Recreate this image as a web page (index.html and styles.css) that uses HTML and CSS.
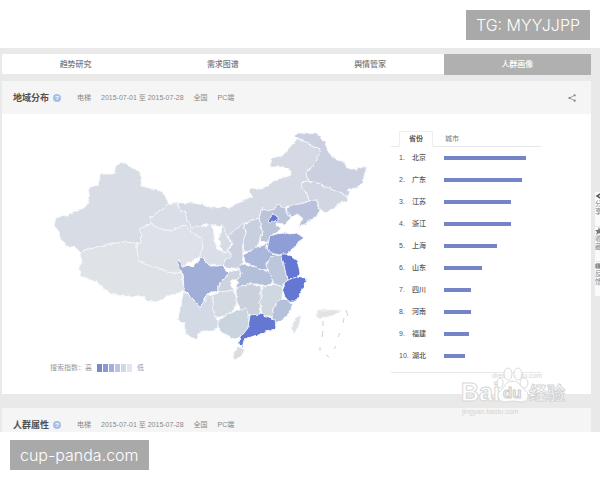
FILE: index.html
```
<!DOCTYPE html>
<html lang="zh-CN">
<head>
<meta charset="utf-8">
<meta name="viewport" content="width=device-width, initial-scale=1">
<title>人群画像</title>
<link rel="stylesheet" href="styles.css">
</head>
<body>
<header class="top"><span class="tag">TG: MYYJJPP</span></header>
<main class="stage">
  <nav class="tabs">
    <a href="#">趋势研究</a>
    <a href="#">需求图谱</a>
    <a href="#">舆情管家</a>
    <a href="#" class="current" aria-current="page">人群画像</a>
  </nav>
  <section class="panel">
    <div class="panel-head">
      <h2>地域分布</h2>
      <button class="help" aria-label="说明">?</button>
      <span class="meta">电梯</span>
      <span class="meta">2015-07-01 至 2015-07-28</span>
      <span class="meta">全国</span>
      <span class="meta">PC端</span>
      <button class="share" aria-label="分享">
        <svg viewBox="0 0 8 8" width="8" height="8"><path d="M6.8 1.2 1.4 4l5.4 2.8" fill="none" stroke="#999" stroke-width=".9"/><circle cx="6.7" cy="1.3" r="1.1" fill="#888"/><circle cx="1.4" cy="4" r="1.1" fill="#888"/><circle cx="6.7" cy="6.7" r="1.1" fill="#888"/></svg>
      </button>
    </div>
    <div class="panel-body">
      <div class="region">
        <svg class="map" viewBox="50 130 304 232" role="img" aria-label="地域分布地图">
          <defs><filter id="coast" x="-5%" y="-5%" width="110%" height="110%" color-interpolation-filters="sRGB"><feTurbulence type="fractalNoise" baseFrequency=".2" numOctaves="2" seed="4"/><feDisplacementMap in="SourceGraphic" scale="4" xChannelSelector="R" yChannelSelector="G"/></filter></defs>
          <g filter="url(#coast)" stroke="#f4f6fa" stroke-width=".9" stroke-linejoin="round">
            <path fill="#d8dde5" d="M123 160 116 165 114 173 101 173 98 184 88 187 90 196 86 206 71 213 56 217 54 225 59 230 60 237 66 245 75 246 80 253 84 249 100 246 121 241 140 242 142 235 139 228 151 223 151 216 169 203 163 191 153 188 141 185 140 171 129 166z"/>
            <path fill="#dfe2e7" d="M80 253 84 249 100 246 121 241 137 242 138 260 153 266 173 272 181 270 184 290 168 295 156 301 148 300 143 295 131 296 111 293 96 281 81 275 79 266 82 260z"/>
            <path fill="#dee1e7" d="M140 242 142 235 139 228 151 223 162 229 173 229 184 224 190 229 202 238 203 247 199 257 187 262 181 270 173 272 153 266 138 260 137 242z"/>
            <path fill="#dadee7" d="M169 203 177 202 180 208 186 211 187 218 192 226 205 225 210 222 215 233 213 238 218 248 225 252 229 250 232 256 226 258 222 265 209 264 203 257 199 257 203 247 202 238 190 229 184 224 173 229 162 229 151 223 151 216z"/>
            <path fill="#d4d9e3" d="M177 202 195 202 213 207 230 206 248 197 254 195 249 190 250 187 262 188 275 179 290 175 291 170 284 166 270 166 272 158 283 154 297 138 304 140 312 145 321 148 317 160 306 173 308 180 302 181 303 188 308 195 309 200 300 203 290 204 285 207 280 203 271 210 262 208 259 217 243 222 228 237 222 226 212 224 207 222 200 226 192 226 187 218 186 211 180 208z"/>
            <path fill="#cbd0e0" d="M294 135 298 132 318 133 324 140 329 152 337 159 345 161 346 168 357 168 367 165 362 182 355 187 349 188 347 196 340 192 328 187 317 182 308 180 306 173 317 160 321 148 312 145 304 140z"/>
            <path fill="#d1d6e2" d="M302 181 308 180 317 182 328 187 340 192 347 196 348 199 338 204 330 209 325 212 320 208 316 199 309 200 308 195 303 188z"/>
            <path fill="#b9c1dd" d="M316 199 320 210 316 216 305 223 299 226 302 216 296 213 291 217 287 210 290 204 300 203 309 200z"/>
            <path fill="#bcc4da" d="M262 208 271 210 280 203 285 207 291 217 285 223 276 222 281 228 275 232 268 242 260 240 262 230 259 217z"/>
            <path fill="#6275d0" d="M268 220 273 213 277 215 277 219 271 222z"/>
            <path fill="#c8cfde" d="M244 223 259 217 262 230 259 240 258 248 245 251 243 240 246 232z"/>
            <path fill="#cbd1df" d="M243 222 246 232 243 240 244 251 242 262 239 268 226 266 222 264 226 258 232 256 229 250 225 252 233 244 228 235z"/>
            <path fill="#d6dbe4" d="M222 223 228 237 232 243 225 252 220 246 219 236z"/>
            <path fill="#8f9ed7" d="M267 248 270 235 283 231 290 233 297 232 304 237 298 241 293 248 287 253 279 254 270 252z"/>
            <path fill="#aab6da" d="M243 254 258 246 267 243 267 248 272 252 277 255 268 259 266 263 270 270 262 268 252 265 245 260z"/>
            <path fill="#bdc7db" d="M270 256 281 254 284 262 287 273 287 279 282 286 274 282 270 274 266 264z"/>
            <path fill="#6477d3" d="M281 253 288 253 297 260 300 272 297 277 287 278 284 264z"/>
            <path fill="#6477d3" d="M287 279 297 276 306 278 302 290 296 300 288 300 282 290z"/>
            <path fill="#b4c0da" d="M239 268 241 262 252 265 262 268 270 272 273 281 265 285 256 283 248 283 236 288 238 278 241 273z"/>
            <path fill="#cdd4df" d="M229 272 239 268 241 273 238 278 230 280 234 289 224 291 217 290 220 282z"/>
            <path fill="#a1aed7" d="M178 257 183 266 193 265 202 257 210 265 222 265 229 272 220 282 217 290 207 293 203 303 200 307 193 298 188 292 184 290 183 273 177 262z"/>
            <path fill="#d3d9e5" d="M184 291 193 298 200 307 205 300 207 293 213 296 213 306 215 316 220 322 214 330 203 330 198 333 196 339 186 333 184 323 177 318 181 307 182 297z"/>
            <path fill="#d3dae2" d="M212 295 220 291 234 289 237 300 235 308 225 315 215 316 213 306z"/>
            <path fill="#cad1dd" d="M236 288 248 283 261 285 261 300 260 312 253 315 246 312 240 308 237 300z"/>
            <path fill="#d0d8df" d="M262 286 274 283 282 286 281 298 273 308 272 315 262 315 260 302z"/>
            <path fill="#b5c0da" d="M281 297 288 300 293 302 291 308 284 318 276 323 272 316 273 308z"/>
            <path fill="#cad4de" d="M218 320 230 312 246 307 249 315 249 325 243 335 234 338 222 331 218 326z"/>
            <path fill="#6477d3" d="M250 314 260 313 275 318 276 327 260 333 245 338 242 346 239 342 240 337 248 327z"/>
            <path fill="#d9dce0" d="M233 357 234 351 238 347 245 348 242 355 236 359z"/>
            <path fill="#e0e3e6" d="M298 314 301 316 298 327 294 333 292 326 295 318z"/>
            <path fill="#e2e3e3" d="M317 309 342 309 334 314 320 318 317 316z"/>
          </g>
          <path d="M323 320v5M323 330l-1 6M320 346v4M326 354l3 2M334 348l2-3M338 336l2-4M343 322l1-5M346 309l2 6" fill="none" stroke="#ccc" stroke-width=".9"/>
        </svg>
        <div class="legend"><span>搜索指数：高</span><span class="scale"><i class="s1"></i><i class="s2"></i><i class="s3"></i><i class="s4"></i><i class="s5"></i><i class="s6"></i></span><span>低</span></div>
      </div>
      <div class="rank">
        <div class="rank-tabs"><button class="on">省份</button><button>城市</button></div>
        <ol>
          <li><span>1.</span><b>北京</b><i style="width:82px"></i></li>
          <li><span>2.</span><b>广东</b><i style="width:78px"></i></li>
          <li><span>3.</span><b>江苏</b><i style="width:67px"></i></li>
          <li><span>4.</span><b>浙江</b><i style="width:67px"></i></li>
          <li><span>5.</span><b>上海</b><i style="width:53px"></i></li>
          <li><span>6.</span><b>山东</b><i style="width:38px"></i></li>
          <li><span>7.</span><b>四川</b><i style="width:27px"></i></li>
          <li><span>8.</span><b>河南</b><i style="width:27px"></i></li>
          <li><span>9.</span><b>福建</b><i style="width:25px"></i></li>
          <li><span>10.</span><b>湖北</b><i style="width:21px"></i></li>
        </ol>
      </div>
    </div>
  </section>
  <section class="panel">
    <div class="panel-head cut">
      <h2>人群属性</h2>
      <button class="help" aria-label="说明">?</button>
      <span class="meta">电梯</span>
      <span class="meta">2015-07-01 至 2015-07-28</span>
      <span class="meta">全国</span>
      <span class="meta">PC端</span>
    </div>
  </section>
  <aside class="dock">
    <a href="#"><svg viewBox="0 0 8 8" width="8" height="8"><path d="M7 1 2 4l5 3" fill="none" stroke="#555" stroke-width="1.5"/></svg>分享</a>
    <a href="#"><svg viewBox="0 0 8 8" width="8" height="8"><path d="M4 0 5 3h3L6 5l1 3-3-2-3 2 1-3-2-2h3z" fill="#777"/></svg>收藏</a>
    <a href="#"><svg viewBox="0 0 8 8" width="8" height="8"><path d="M1 2h7v4H1zM1 4h7M4 2v4" fill="none" stroke="#666"/></svg>反馈</a>
  </aside>
  <div class="watermark">
    <svg viewBox="0 0 112 54" width="112" height="54">
      <text x="32" y="11" class="wm-url">dream   aidu.com</text>
      <text x="1" y="34" class="wm-logo">Bai</text>
      <g fill="#fff" fill-opacity=".85" stroke="#d2d2d2" stroke-width=".8">
        <ellipse cx="48" cy="7" rx="4" ry="6"/><ellipse cx="58" cy="7" rx="4" ry="6"/><ellipse cx="40" cy="16" rx="3" ry="5"/><ellipse cx="64" cy="16" rx="4" ry="5"/>
        <path d="M52 14c-6 0-7 6-12 10-4 4-2 11 5 11 4 0 5-1 8-1s5 1 9 1c6 0 8-7 4-11-5-4-7-10-14-10z"/>
      </g>
      <text x="43" y="31" class="wm-du">du</text><text x="69" y="33" class="wm-cn">经验</text>
      <text x="2" y="47" class="wm-url">jingyan.baidu.com</text>
    </svg>
  </div>
</main>
<footer class="bottom"><span class="tag">cup-panda.com</span></footer>
</body>
</html>
```
FILE: styles.css
```
* { box-sizing: border-box; }
body { margin: 0; background: #fff; color: #777; font: 7px/10px "Liberation Sans", "Noto Sans CJK SC", sans-serif; }
button { padding: 0; border: 0; background: none; font: inherit; color: inherit; }
a { color: inherit; text-decoration: none; }
h2, ol { margin: 0; padding: 0; }
.top { display: flex; justify-content: flex-end; padding: 10px 10px 8px; }
.tag { padding: 0 10px; background: #a9a9a9; color: #fff; font: 300 16px/30px Inter, sans-serif; }
.bottom { display: flex; padding: 8px 10px; }
.stage { position: relative; padding: 6px 9px 0 2px; background: #e9e9e9; overflow: hidden; }
.tabs { display: grid; grid-template-columns: repeat(4, 1fr); height: 20px; background: #fff; border-radius: 2px; }
.tabs a { text-align: center; font-size: 8px; line-height: 21px; font-weight: 500; }
.tabs .current { background: #b0b0b0; color: #fff; }
.panel { margin-top: 7px; background: #fff; }
.panel + .panel { margin-top: 14px; }
.panel-head { display: flex; align-items: center; gap: 10px; height: 33px; padding: 0 15px 0 11px; background: #f5f5f5; }
.panel-head.cut { height: 24px; padding-top: 10px; }
.panel-head h2 { color: #505050; font-size: 9px; line-height: 14px; font-weight: 700; }
.help { width: 8px; height: 8px; margin-left: -6px; margin-right: 6px; border-radius: 50%; background: #a5c0e6; color: #fff; font-size: 6px; line-height: 8px; font-weight: 700; }
.meta { color: #888; white-space: nowrap; }
.share { display: flex; margin-left: auto; }
.panel-body { display: flex; justify-content: space-between; min-height: 280px; padding: 17px 50px 0 48px; }
.region { flex: 0 1 320px; }
.map { display: block; width: 95%; overflow: visible; }
.legend { display: flex; align-items: center; gap: 5px; color: #999; }
.scale { display: flex; gap: 1px; }
.scale i { width: 5px; height: 8px; }
.s1 { background: #7b88c6; }
.s2 { background: #8d9ad0; }
.s3 { background: #a2addb; }
.s4 { background: #bac3e3; }
.s5 { background: #d3d8e5; }
.s6 { background: #e4e6e9; }
.rank { flex: 0 0 150px; margin-bottom: 21px; border-bottom: 1px solid #e8e8e8; }
.rank-tabs { display: flex; gap: 2px; height: 16px; padding-left: 8px; border-bottom: 1px solid #e8e8e8; }
.rank-tabs button { width: 34px; height: 16px; }
.rank-tabs .on { border: 1px solid #eee; border-bottom-color: #fff; color: #555; font-weight: 700; }
.rank ol { list-style: none; }
.rank li { display: grid; grid-template-columns: 13px 32px 1fr; align-items: center; height: 22px; padding-left: 8px; color: #555; }
.rank b { font-weight: 500; }
.rank i { height: 4px; background: #7484c6; }
.dock { position: absolute; right: 0; top: 144px; width: 5px; overflow: hidden; color: #888; }
.dock a { display: block; width: 8px; height: 34px; margin-bottom: 1px; background: #fafafa; line-height: 8px; }
.dock svg { display: block; }
.watermark { position: absolute; left: 460px; top: 319px; }
.watermark svg { display: block; }
.wm-url { font: 7px "Liberation Sans", sans-serif; fill: #d4d4d4; }
.wm-logo { font: 700 25px "Liberation Sans", sans-serif; fill: #fff; stroke: #d8d8d8; stroke-width: 1px; }
.wm-du { font: 700 15px "Liberation Sans", sans-serif; fill: #f4f4f4; stroke: #ccc; stroke-width: 1px; }
.wm-cn { font: 700 18px "Noto Sans CJK SC", sans-serif; fill: #fff; stroke: #d4d4d4; stroke-width: 1px; }
```
